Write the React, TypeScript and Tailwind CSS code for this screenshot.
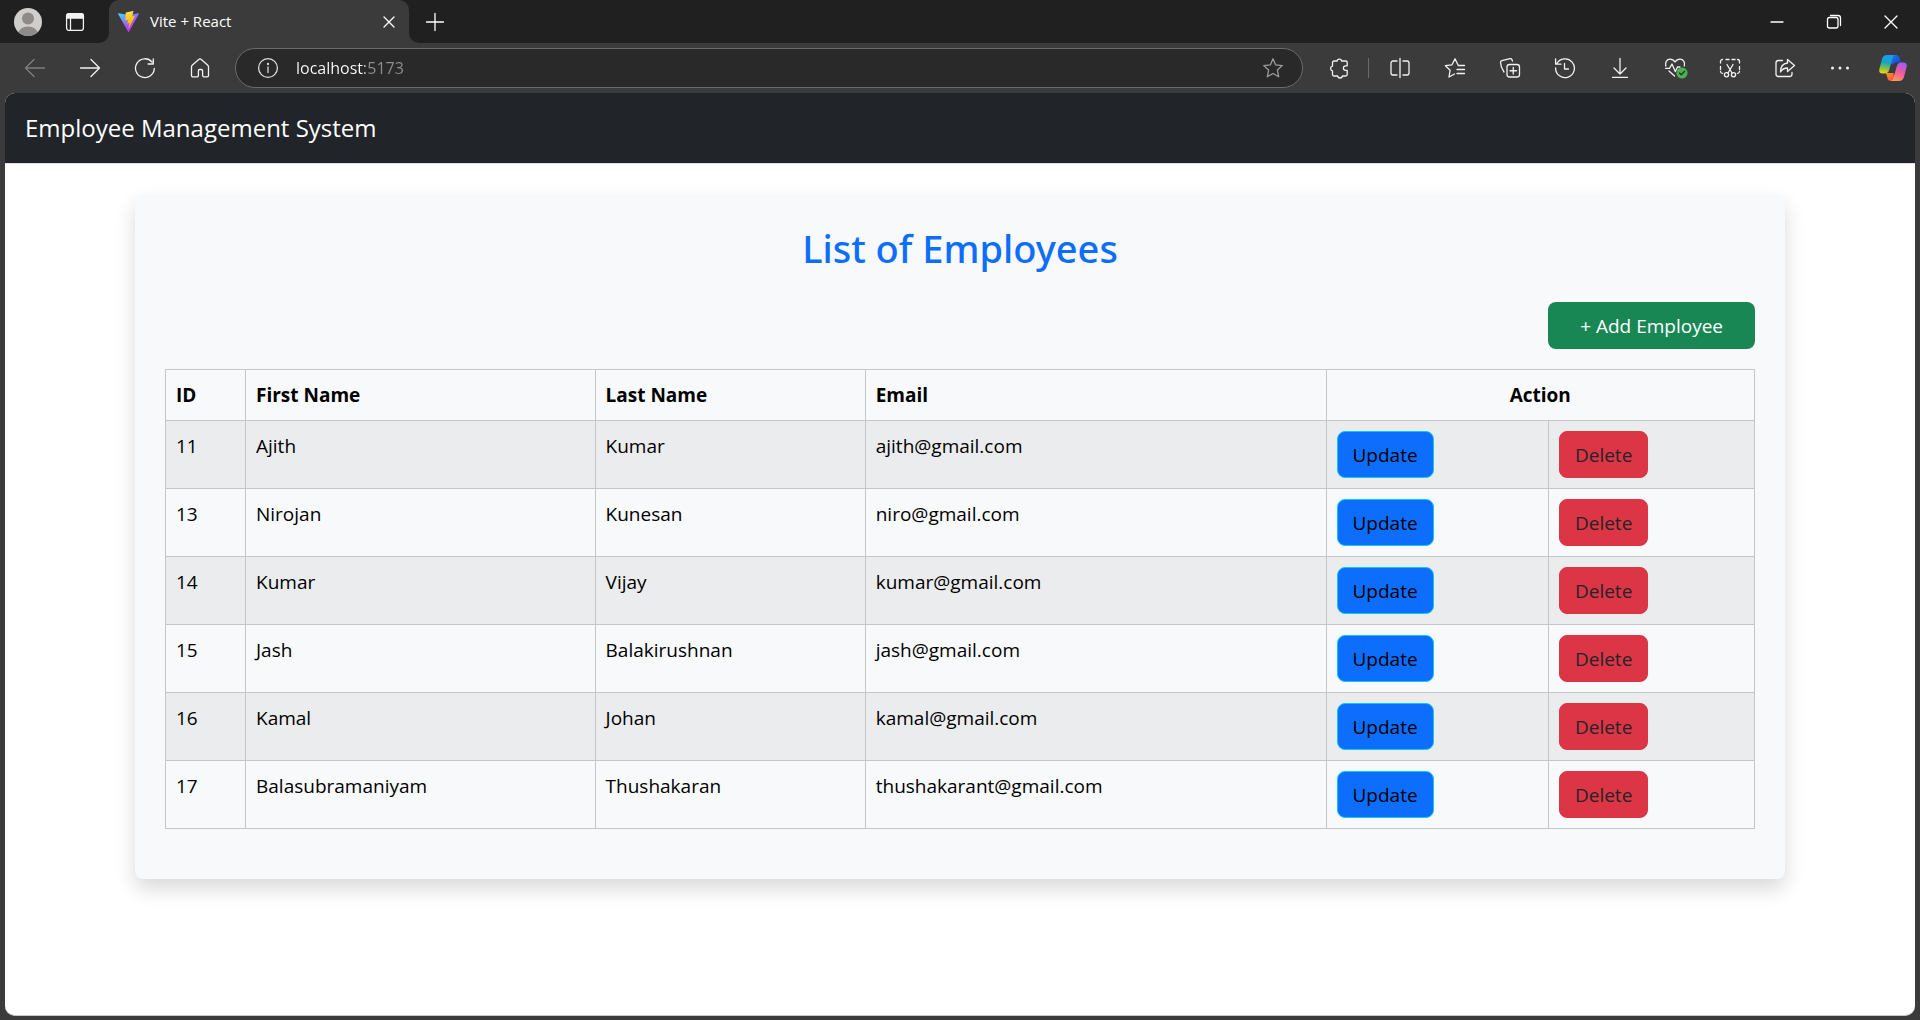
import type { ReactNode } from "react";

type Employee = { id: number; first: string; last: string; email: string };

const employees: Employee[] = [
  { id: 11, first: "Ajith", last: "Kumar", email: "ajith@gmail.com" },
  { id: 13, first: "Nirojan", last: "Kunesan", email: "niro@gmail.com" },
  { id: 14, first: "Kumar", last: "Vijay", email: "kumar@gmail.com" },
  { id: 15, first: "Jash", last: "Balakirushnan", email: "jash@gmail.com" },
  { id: 16, first: "Kamal", last: "Johan", email: "kamal@gmail.com" },
  { id: 17, first: "Balasubramaniyam", last: "Thushakaran", email: "thushakarant@gmail.com" },
];

function Icon({ children, className = "" }: { children: ReactNode; className?: string }) {
  return (
    <svg
      viewBox="0 0 22 22"
      width="22"
      height="22"
      fill="none"
      stroke="currentColor"
      strokeWidth="1.3"
      strokeLinecap="round"
      strokeLinejoin="round"
      aria-hidden="true"
      className={className}
    >
      {children}
    </svg>
  );
}

const icons = {
  back: (
    <Icon>
      <path d="M20.5 11H1.5M10 2.5 1.5 11l8.500 8.500" />
    </Icon>
  ),
  forward: (
    <Icon>
      <path d="M1.500 11h19M12 2.500 20.500 11 12 19.500" />
    </Icon>
  ),
  reload: (
    <Icon>
      <path d="M20.300 11.300A9.400 9.400 0 1 1 18 5M19.300 1.800v5.200h-5.200" />
    </Icon>
  ),
  home: (
    <Icon>
      <path d="M2.500 9.700a2 2 0 0 1 .7-1.500l6.500-5.700a2 2 0 0 1 2.600 0l6.500 5.700a2 2 0 0 1 .7 1.500v8.800a1.300 1.300 0 0 1-1.300 1.300h-3.300a1.300 1.300 0 0 1-1.300-1.300v-4.700a1.300 1.300 0 0 0-1.300-1.300h-1.600a1.300 1.300 0 0 0-1.300 1.300v4.700a1.300 1.300 0 0 1-1.300 1.300H3.800a1.300 1.300 0 0 1-1.300-1.300Z" />
    </Icon>
  ),
  info: (
    <Icon>
      <circle cx="11" cy="11" r="9.400" />
      <path d="M11 10v5.500" />
      <circle cx="11" cy="7" r=".5" fill="currentColor" />
    </Icon>
  ),
  star: (
    <Icon>
      <path d="M11 1.800 13.700 7.900l6.600.7-4.900 4.500 1.300 6.700L11 16.500l-5.700 3.300 1.300-6.700-4.900-4.500 6.600-.7Z" />
    </Icon>
  ),
  puzzle: (
    <Icon>
      <path d="M4.500 5.500a1.500 1.500 0 0 1 1.500-1.500h3a2.400 2.400 0 0 1 4.700 0h4a1.500 1.500 0 0 1 1.500 1.500v3.300h-1.500a2.300 2.300 0 0 0 0 4.600h1.500v4.100a1.500 1.500 0 0 1-1.500 1.500h-3.200a2.500 2.500 0 0 1-4.900 0H6A1.500 1.500 0 0 1 4.500 17.500v-3.700a2.400 2.400 0 0 1 0-4.700Z" />
    </Icon>
  ),
  split: (
    <Icon>
      <path d="M8 4H4a2 2 0 0 0-2 2v10a2 2 0 0 0 2 2h4M14 4h4a2 2 0 0 1 2 2v10a2 2 0 0 1-2 2h-4M11 1.500v19" />
    </Icon>
  ),
  favorites: (
    <Icon>
      <path d="M20.500 8.500h-6.200L11 1.800 8 7.800l-6.600.9 4.700 4.600L5 20l5.500-3M13 12.500h7.500M13 16.500h7.500" />
    </Icon>
  ),
  collections: (
    <Icon>
      <rect x="8" y="7.500" width="12.500" height="12.500" rx="2.500" />
      <path d="M14.250 10.500v6.500M11 13.750h6.500M5 15C3.200 12.500 1.600 9.500 1.500 5.300c0-1 .6-1.500 1.400-1.700L11 1.700c1-.2 1.700.2 2 1l.4 1.500" />
    </Icon>
  ),
  history: (
    <Icon>
      <path d="M2.700 6.800A9.400 9.400 0 1 1 1.600 11M1.600 1.800v5.400h5.400M10.500 6.500v5.500h4" />
    </Icon>
  ),
  download: (
    <Icon>
      <path d="M11 1.500v15M5 11l6 6 6-6M3.500 20.300h15" />
    </Icon>
  ),
  health: (
    <Icon className="overflow-visible">
      <path d="M1.800 9C.8 5 3 2.200 6 2.200c2.200 0 3.800 1 5 2.800 1.200-1.800 2.800-2.800 5-2.800 3 0 5.500 2.800 4.300 6.800M1.500 11.300h4L8 7l3.300 7.500 2.200-4.500h2.500M5 14l5.500 5" />
      <circle cx="18" cy="16" r="5.600" fill="#4caf50" stroke="none" />
      <path d="m15.500 16 1.800 1.800 3.400-3.500" stroke="#1f3d20" />
    </Icon>
  ),
  capture: (
    <Icon>
      <path d="M1.500 6V4.500a2 2 0 0 1 2-2M7 2.500h3M13 2.500h3M18.500 2.500a2 2 0 0 1 2 2V6M1.500 9.500v3M20.500 9.500v3M1.500 14.500a2 2 0 0 0 2 1.800M20.500 14.500a2 2 0 0 1-2 1.800M8 7.500l5 8.500M14 7.500l-5 8.500" />
      <circle cx="7.500" cy="17.800" r="2.100" />
      <circle cx="14.500" cy="17.800" r="2.100" />
    </Icon>
  ),
  share: (
    <Icon>
      <path d="M8.500 3.500h-4a2.500 2.500 0 0 0-2.500 2.500v11a2.500 2.500 0 0 0 2.500 2.500h11a2.500 2.500 0 0 0 2.500-2.500v-1.500M13.500 2.500 20.500 8.500l-7 6v-3.500c-3.500 0-5.500 1.200-7 4 0-4.500 2-8.500 7-9Z" />
    </Icon>
  ),
  more: (
    <Icon>
      <g fill="currentColor" stroke="none">
        <circle cx="3.500" cy="11" r="1.500" />
        <circle cx="11" cy="11" r="1.500" />
        <circle cx="18.500" cy="11" r="1.500" />
      </g>
    </Icon>
  ),
};

function ViteLogo() {
  return (
    <svg viewBox="0 0 256 257" width="21" height="21" aria-hidden="true">
      <defs>
        <linearGradient id="viteBody" x1="0%" x2="58%" y1="8%" y2="79%">
          <stop offset="0%" stopColor="#41D1FF" />
          <stop offset="100%" stopColor="#BD34FE" />
        </linearGradient>
        <linearGradient id="viteBolt" x1="43%" x2="50%" y1="2%" y2="89%">
          <stop offset="0%" stopColor="#FFEA83" />
          <stop offset="8%" stopColor="#FFDD35" />
          <stop offset="100%" stopColor="#FFA800" />
        </linearGradient>
      </defs>
      <path
        fill="url(#viteBody)"
        d="M255.153 37.938 134.897 252.976c-2.483 4.440-8.862 4.466-11.382.048L.875 37.958c-2.746-4.814 1.371-10.646 6.827-9.670l120.385 21.517a6.537 6.537 0 0 0 2.322-.004l117.867-21.483c5.438-.991 9.574 4.796 6.877 9.620Z"
      />
      <path
        fill="url(#viteBolt)"
        d="M185.432.063 96.440 17.501a3.268 3.268 0 0 0-2.634 3.014l-5.474 92.456a3.268 3.268 0 0 0 3.997 3.378l24.777-5.718c2.318-.535 4.413 1.507 3.936 3.838l-7.361 36.047c-.495 2.426 1.782 4.500 4.151 3.780l15.304-4.649c2.372-.720 4.652 1.360 4.150 3.788l-11.698 56.621c-.732 3.542 3.979 5.473 5.943 2.437l1.313-2.028 72.516-144.720c1.215-2.423-.880-5.186-3.540-4.672l-25.505 4.922c-2.396.462-4.435-1.770-3.759-4.114l16.646-57.705c.677-2.350-1.370-4.583-3.769-4.113Z"
      />
    </svg>
  );
}

function CopilotLogo() {
  return (
    <svg viewBox="0 0 28 26" width="28" height="26" aria-hidden="true">
      <defs>
        <linearGradient id="coLeft" x1="0.400" x2="0.250" y1="0" y2="1">
          <stop offset="0" stopColor="#1a9cf0" />
          <stop offset=".4" stopColor="#18a5c4" />
          <stop offset=".7" stopColor="#7cc04f" />
          <stop offset="1" stopColor="#ffd400" />
        </linearGradient>
        <linearGradient id="coTop" x1="0" x2="1" y1="0" y2="1">
          <stop offset="0" stopColor="#1c7cf0" />
          <stop offset="1" stopColor="#1a3fd0" />
        </linearGradient>
        <linearGradient id="coRight" x1="0.700" x2="0.300" y1="0" y2="1">
          <stop offset="0" stopColor="#a35cf0" />
          <stop offset=".5" stopColor="#ee5a9c" />
          <stop offset="1" stopColor="#ff9a55" />
        </linearGradient>
        <linearGradient id="coBottom" x1="0" x2="1" y1="0" y2="1">
          <stop offset="0" stopColor="#ff9a20" />
          <stop offset="1" stopColor="#f0484a" />
        </linearGradient>
      </defs>
      <path fill="url(#coTop)" d="M12 0h5c2 0 3 1 3.600 3l1.200 4.500h-4c-2 0-3 .5-3.600 2L12 9Z" />
      <path fill="url(#coBottom)" d="M7 18h7.500l1 8H12c-2 0-3-1-3.500-3Z" />
      <path fill="url(#coLeft)" d="M8 0h8.500c-1.500 0-2.300 1-2.800 2.800l-3.500 12c-.8 2.500-2 3.700-4.200 3.700H3.500C.8 18.500-.3 16.700.4 14L3 4C3.800 1.200 5.500 0 8 0Z" />
      <path fill="url(#coRight)" d="M20 26h-8.500c1.500 0 2.300-1 2.800-2.800l3.500-12C18.600 8.700 19.800 7.500 22 7.500h2.500c2.700 0 3.800 1.800 3.100 4.500L25 22c-.8 2.800-2.500 4-5 4Z" />
    </svg>
  );
}

function ToolButton({ label, icon, muted = false }: { label: string; icon: ReactNode; muted?: boolean }) {
  return (
    <button
      type="button"
      aria-label={label}
      className={`flex h-10 w-[55px] shrink-0 items-center justify-center ${muted ? "text-[#7f7f7f]" : "text-[#f2f2f2]"}`}
    >
      {icon}
    </button>
  );
}

function TabStrip() {
  return (
    <div className="flex h-[43px] items-stretch bg-[#202020]">
      <button type="button" aria-label="Profile" className="flex w-14 items-center justify-center">
        <svg viewBox="0 0 28 28" width="28" height="28" aria-hidden="true">
          <defs>
            <clipPath id="avatarClip">
              <circle cx="14" cy="14" r="14" />
            </clipPath>
          </defs>
          <g clipPath="url(#avatarClip)">
            <rect width="28" height="28" fill="#d0cecb" />
            <circle cx="14" cy="10.500" r="6" fill="#8d8a87" />
            <ellipse cx="14" cy="26" rx="10" ry="7.500" fill="#8d8a87" />
          </g>
        </svg>
      </button>
      <button type="button" aria-label="Tab actions" className="flex w-[38px] items-center justify-center text-[#f2f2f2]">
        <Icon>
          <rect x="2.600" y="2.600" width="16.800" height="16.800" rx="2.500" />
          <path d="M2.600 7V5a2.400 2.400 0 0 1 2.400-2.400h12A2.400 2.400 0 0 1 19.400 5v2Z" fill="currentColor" />
          <path d="M6.500 7v12" />
        </Icon>
      </button>
      <div className="relative ml-[15px] flex w-[300px] items-center rounded-t-[10px] bg-[#3b3b3b] pr-1 pl-[9px]">
        <svg viewBox="0 0 10 10" width="10" height="10" className="absolute bottom-0 -left-[10px]" aria-hidden="true">
          <path d="M10 0v10H0A10 10 0 0 0 10 0Z" fill="#3b3b3b" />
        </svg>
        <svg viewBox="0 0 10 10" width="10" height="10" className="absolute -right-[10px] bottom-0" aria-hidden="true">
          <path d="M0 0v10h10A10 10 0 0 1 0 0Z" fill="#3b3b3b" />
        </svg>
        <ViteLogo />
        <span className="ml-[11px] flex-1 text-[15px] text-white">Vite + React</span>
        <button type="button" aria-label="Close tab" className="flex size-8 items-center justify-center text-white">
          <Icon>
            <path d="m6 6 10 10M16 6 6 16" />
          </Icon>
        </button>
      </div>
      <button type="button" aria-label="New tab" className="ml-[10px] flex w-8 items-center justify-center text-white">
        <Icon>
          <path d="M2.500 11h17M11 2.500v17" />
        </Icon>
      </button>
      <div className="ml-auto flex pr-px text-white">
        <button type="button" aria-label="Minimize" className="flex w-[57px] items-center justify-center">
          <Icon>
            <path d="M5 11h12" />
          </Icon>
        </button>
        <button type="button" aria-label="Restore" className="flex w-[57px] items-center justify-center">
          <Icon>
            <rect x="4.500" y="6.500" width="10.500" height="10.500" rx="2" />
            <path d="M7.500 4.500h7.500a2.500 2.500 0 0 1 2.500 2.500v7.500" />
          </Icon>
        </button>
        <button type="button" aria-label="Close window" className="flex w-[57px] items-center justify-center">
          <Icon>
            <path d="m5 5 12 12M17 5 5 17" />
          </Icon>
        </button>
      </div>
    </div>
  );
}

function Toolbar() {
  return (
    <div className="flex h-[50px] items-center pr-[2px] pl-[7px]">
      <ToolButton label="Back" icon={icons.back} muted />
      <ToolButton label="Forward" icon={icons.forward} />
      <ToolButton label="Refresh" icon={icons.reload} />
      <ToolButton label="Home" icon={icons.home} />
      <div className="ml-2 flex h-10 flex-1 items-center rounded-full border border-[#6b6b6b] bg-[#292929] pr-[18px] pl-[21px]">
        <span className="text-[#dcdcdc]">{icons.info}</span>
        <input
          type="text"
          aria-label="Address"
          defaultValue="localhost:5173"
          className="ml-[17px] min-w-0 flex-1 bg-[linear-gradient(90deg,#ffffff_69px,#8f8f8f_69px)] bg-clip-text text-base text-transparent outline-none"
        />
        <button type="button" aria-label="Add to favorites" className="text-[#9a9a9a]">
          {icons.star}
        </button>
      </div>
      <div className="ml-2 flex items-center">
        <ToolButton label="Extensions" icon={icons.puzzle} />
        <span className="mr-[3px] ml-[2px] h-5 w-px bg-[#6b6b6b]" />
        <ToolButton label="Split screen" icon={icons.split} />
        <ToolButton label="Favorites" icon={icons.favorites} />
        <ToolButton label="Collections" icon={icons.collections} />
        <ToolButton label="History" icon={icons.history} />
        <ToolButton label="Downloads" icon={icons.download} />
        <ToolButton label="Browser essentials" icon={icons.health} />
        <ToolButton label="Screenshot" icon={icons.capture} />
        <ToolButton label="Share" icon={icons.share} />
        <ToolButton label="Settings and more" icon={icons.more} />
        <button type="button" aria-label="Copilot" className="flex h-10 w-[51px] items-center justify-center">
          <CopilotLogo />
        </button>
      </div>
    </div>
  );
}

const cell = "border border-[#c4c6c8] px-[10px] py-[10px] align-top";

function EmployeeTable() {
  return (
    <table className="mb-5 w-full table-fixed border-collapse text-left text-[19px] leading-[30px] text-black">
      <colgroup>
        <col className="w-20" />
        <col className="w-[22%]" />
        <col className="w-[17%]" />
        <col className="w-[29%]" />
        <col className="w-[14%]" />
        <col />
      </colgroup>
      <thead>
        <tr className="font-bold">
          <th scope="col" className={cell}>ID</th>
          <th scope="col" className={cell}>First Name</th>
          <th scope="col" className={cell}>Last Name</th>
          <th scope="col" className={cell}>Email</th>
          <th scope="colgroup" colSpan={2} className={`${cell} text-center`}>Action</th>
        </tr>
      </thead>
      <tbody>
        {employees.map((e) => (
          <tr key={e.id} className="odd:bg-[#ebeced]">
            <td className={cell}>{e.id}</td>
            <td className={cell}>{e.first}</td>
            <td className={cell}>{e.last}</td>
            <td className={cell}>{e.email}</td>
            <td className={cell}>
              <button
                type="button"
                className="block h-[47px] rounded-lg border border-[#0dcaf0] bg-[#0d6efd] px-[15px] text-black"
              >
                Update
              </button>
            </td>
            <td className={cell}>
              <button
                type="button"
                className="block h-[47px] rounded-lg border border-[#dc3545] bg-[#dc3545] px-[15px] text-[#212529]"
              >
                Delete
              </button>
            </td>
          </tr>
        ))}
      </tbody>
    </table>
  );
}

export default function App() {
  return (
    <div className="flex min-h-screen flex-col bg-[#3b3b3b] font-['Open_Sans','Noto_Sans',sans-serif]">
      <TabStrip />
      <Toolbar />
      <div className="mx-[5px] mb-1 flex flex-1 flex-col overflow-hidden rounded-[10px] border-b border-[#c9c9c9] bg-white">
        <nav className="flex h-[70px] items-center bg-[#212529] px-5">
          <a href="#" className="text-2xl text-white">
            Employee Management System
          </a>
        </nav>
        <main className="border-t border-[#dee2e6] px-5 pt-[30px] pb-10">
          <section className="mx-auto flex max-w-[1650px] flex-col rounded-lg bg-[#f8f9fa] p-[30px] shadow-[0_10px_20px_rgba(0,0,0,0.15)]">
            <h2 className="mb-[30px] text-center font-['Noto_Sans',sans-serif] text-[38px] leading-[48px] font-medium text-[#0d6efd]">
              List of Employees
            </h2>
            <button
              type="button"
              className="mb-5 h-[47px] self-end rounded-lg bg-[#198754] px-8 text-[19px] leading-[30px] text-white"
            >
              + Add Employee
            </button>
            <EmployeeTable />
          </section>
        </main>
      </div>
    </div>
  );
}
